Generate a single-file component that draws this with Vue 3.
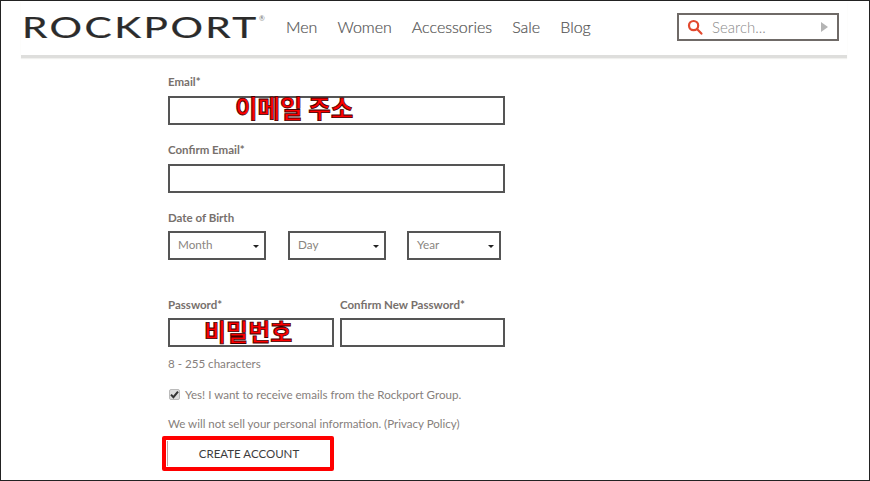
<script setup>
const nav = ['Men', 'Women', 'Accessories', 'Sale', 'Blog']
const dates = [
  { label: 'Month', cls: 'month' },
  { label: 'Day', cls: 'day' },
  { label: 'Year', cls: 'year' }
]
</script>

<template>
  <div class="frame">
    <header class="header">
      <div class="logo"><span class="wordmark">ROCKPORT</span><span class="reg">®</span></div>
      <nav class="nav">
        <span v-for="item in nav" :key="item">{{ item }}</span>
      </nav>
      <div class="search">
        <svg class="glass" width="16" height="16" viewBox="0 0 16 16" fill="none" stroke="#e2492f" stroke-width="2.2">
          <circle cx="6.6" cy="6.6" r="4.6" />
          <path d="M10 10l4.4 4.6" stroke-linecap="round" />
        </svg>
        <span class="search-text">Search...</span>
        <span class="play"></span>
      </div>
    </header>

    <form class="form" @submit.prevent>
      <label class="label">Email*</label>
      <div class="box full">
        <span class="note note-email">이메일 주소</span>
      </div>

      <label class="label second">Confirm Email*</label>
      <div class="box full"></div>

      <label class="label third">Date of Birth</label>
      <div class="dates">
        <div v-for="d in dates" :key="d.label" class="select" :class="d.cls">
          <span>{{ d.label }}</span>
          <i class="caret"></i>
        </div>
      </div>

      <div class="pw-labels">
        <label class="label pw-a">Password*</label>
        <label class="label">Confirm New Password*</label>
      </div>
      <div class="pw-row">
        <div class="box pw-1"><span class="note note-pw">비밀번호</span></div>
        <div class="box pw-2"></div>
      </div>

      <p class="hint">8 - 255 characters</p>

      <div class="check-row">
        <span class="check">
          <svg width="9" height="9" viewBox="0 0 9 9" fill="none" stroke="#333" stroke-width="2"><path d="M1 4.6l2.4 2.6L8 1.6" /></svg>
        </span>
        <span>Yes! I want to receive emails from the Rockport Group.</span>
      </div>

      <p class="privacy">We will not sell your personal information. (Privacy Policy)</p>

      <div class="highlight">
        <div class="btn">CREATE ACCOUNT</div>
      </div>
    </form>
  </div>
</template>

<style>
html, body { margin: 0; background: #fff; }
</style>

<style scoped>
.frame {
  box-sizing: border-box;
  width: 870px;
  height: 481px;
  overflow: hidden;
  background: #fff;
  border: 1px solid #222;
  font-family: Lato, "Liberation Sans", sans-serif;
  color: #77706c;
}
.header {
  display: flex;
  align-items: flex-start;
  height: 54px;
  margin: 0 22px 0 20px;
  padding-left: 3px;
  border-bottom: 3px solid #dededc;
  box-shadow: 0 1px 1px #f0f0ee;
}
.logo {
  position: relative;
  flex: none;
  width: 240px;
  margin-top: 10px;
  line-height: 32px;
  white-space: nowrap;
}
.wordmark {
  display: inline-block;
  margin-left: -2px;
  font-size: 28px;
  letter-spacing: 1.7px;
  color: #2b2b2b;
  -webkit-text-stroke: 0.2px #2b2b2b;
  transform: scaleX(1.45);
  transform-origin: left center;
}
.reg {
  position: absolute;
  left: 235px;
  top: 1px;
  font-size: 7px;
  line-height: 12px;
  color: #777;
}
.nav {
  display: flex;
  gap: 20px;
  margin-top: 15px;
  margin-left: 22px;
  font-size: 16px;
  font-weight: 300;
  line-height: 22px;
  color: #555;
  -webkit-text-stroke: 0.2px #555;
}
.search {
  display: flex;
  align-items: center;
  box-sizing: border-box;
  width: 162px;
  height: 28px;
  margin-top: 12px;
  margin-left: auto;
  margin-right: 8px;
  padding-left: 8px;
  border: 2px solid #6f6a67;
}
.glass { flex: none; }
.search-text {
  margin-left: 9px;
  font-size: 15px;
  font-weight: 300;
  color: #8a8a8a;
}
.play {
  margin-left: auto;
  margin-right: 9px;
  width: 0;
  height: 0;
  border-left: 7px solid #b4b4b4;
  border-top: 5px solid transparent;
  border-bottom: 5px solid transparent;
}
.form {
  margin-left: 167px;
  width: 340px;
  padding-top: 17px;
}
.label {
  display: block;
  height: 14px;
  font-size: 11.5px;
  line-height: 14px;
  font-weight: 700;
  color: #77706c;
  white-space: nowrap;
}
.second { margin-top: 18px; }
.third { margin-top: 18px; }
.box {
  position: relative;
  box-sizing: border-box;
  height: 29px;
  border: 2px solid #555;
  background: #fff;
}
.full { width: 337px; margin-top: 7px; }
.note {
  position: absolute;
  top: -6px;
  font-family: "Noto Sans CJK KR", sans-serif;
  font-size: 24.5px;
  font-weight: 700;
  line-height: 32px;
  color: #f00;
  -webkit-text-stroke: 0.8px #400;
  white-space: nowrap;
}
.note-email { left: 65px; }
.note-pw { left: 34px; top: -5px; font-size: 24px; }
.dates {
  display: flex;
  margin-top: 6px;
}
.select {
  display: flex;
  align-items: center;
  box-sizing: border-box;
  height: 29px;
  padding: 0 5px 3px 8px;
  border: 2px solid #555;
  font-size: 11.7px;
  color: #8a8580;
}
.select span { flex: 1; }
.month { width: 98px; margin-right: 22px; }
.day { width: 98px; margin-right: 21px; }
.year { width: 94px; }
.caret {
  width: 0;
  height: 0;
  border-left: 3.5px solid transparent;
  border-right: 3.5px solid transparent;
  border-top: 3.5px solid #222;
  margin-top: 5px;
}
.pw-labels {
  display: flex;
  margin-top: 38px;
}
.pw-a { width: 172px; }
.pw-row {
  display: flex;
  gap: 6px;
  margin-top: 6px;
}
.pw-1 { width: 166px; height: 29px; }
.pw-2 { width: 165px; height: 29px; }
.hint {
  margin: 9px 0 0;
  font-size: 11.6px;
  line-height: 16px;
  color: #86807c;
}
.check-row {
  display: flex;
  align-items: center;
  height: 16px;
  margin-top: 14px;
  font-size: 11.6px;
  color: #86807c;
  white-space: nowrap;
}
.check {
  display: flex;
  align-items: center;
  justify-content: center;
  box-sizing: border-box;
  width: 11px;
  height: 11px;
  margin: 0 5px 0 1px;
  background: #ddd;
  border: 1px solid #bbb;
  border-radius: 2px;
}
.privacy {
  margin: 14px 0 0;
  font-size: 11.55px;
  line-height: 16px;
  color: #86807c;
  white-space: nowrap;
}
.highlight {
  box-sizing: border-box;
  width: 172px;
  height: 35px;
  margin: 4px 0 0 -6px;
  padding: 1px 0 1px 1px;
  border: 4px solid #f00;
  border-radius: 2px;
}
.btn {
  box-sizing: border-box;
  height: 100%;
  border-left: 1px solid #b9a9a9;
  text-align: center;
  font-size: 11.5px;
  line-height: 25px;
  color: #3c3c3c;
}
</style>
